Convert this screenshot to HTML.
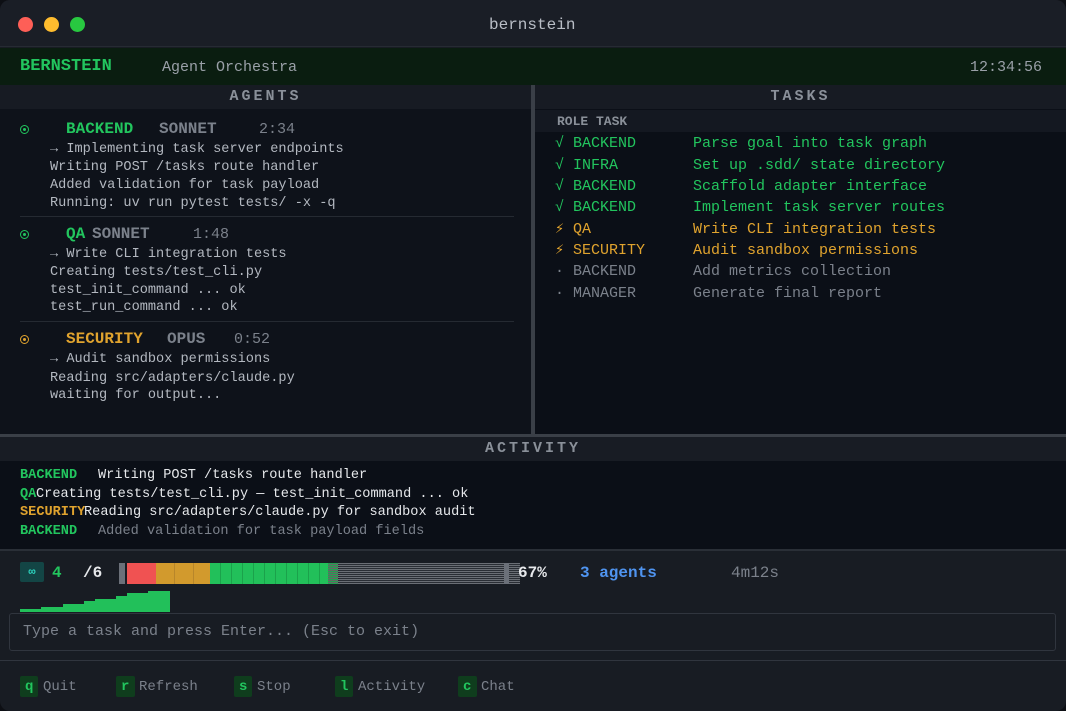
<!DOCTYPE html>
<html><head><meta charset="utf-8"><style>
*{margin:0;padding:0;box-sizing:border-box}
body{width:1066px;height:711px;background:#0d0f14;overflow:hidden;font-family:"Liberation Mono","DejaVu Sans Mono",monospace;position:relative}
.a{position:absolute;white-space:pre;line-height:1}
.g{color:#22c55e}.o{color:#e0a32e}.m{color:#7b818b}.w{color:#e6e8eb}.t{color:#b3b8c0}
.b{font-weight:bold}
.sec{position:absolute;background:#171b23;color:#8a9099;font-weight:bold;font-size:15px;letter-spacing:3px;text-align:center;line-height:24px}
.ic{position:absolute;width:9px;height:9px;border-radius:50%;border:1.5px solid currentColor}
.ic::after{content:"";position:absolute;left:1.5px;top:1.5px;width:3px;height:3px;border-radius:50%;background:currentColor}
</style></head><body>
<div style="position:absolute;left:0;top:0;width:1066px;height:711px;background:#181c23;border-radius:10px"></div>
<div style="position:absolute;left:0;top:0;width:1066px;height:47px;background:#1a1e26;border-radius:10px 10px 0 0;border-bottom:1px solid #262b33"></div>
<div style="position:absolute;left:18px;top:17px;width:15px;height:15px;border-radius:50%;background:#fe5f57"></div>
<div style="position:absolute;left:44px;top:17px;width:15px;height:15px;border-radius:50%;background:#febc2e"></div>
<div style="position:absolute;left:70px;top:17px;width:15px;height:15px;border-radius:50%;background:#28c840"></div>
<div class="a" style="left:489px;top:17px;font-size:16px;color:#b9bec6">bernstein</div>
<div style="position:absolute;left:0;top:48px;width:1066px;height:37px;background:#0a1d10"></div>
<div class="a g b" style="left:20px;top:58px;font-size:17px">BERNSTEIN</div>
<div class="a" style="left:162px;top:60px;font-size:15px;color:#9aa0a8">Agent Orchestra</div>
<div class="a" style="left:970px;top:60px;font-size:15px;color:#9aa0a8">12:34:56</div>
<div style="position:absolute;left:0;top:85px;width:531px;height:349px;background:#0e121a"></div>
<div class="sec" style="left:0;top:85px;width:531px">AGENTS</div>
<div style="position:absolute;left:531px;top:85px;width:4px;height:349px;background:#3a3f47"></div>
<div style="font-size:13.6px">
<div class="ic g" style="left:20px;top:125px"></div>
<div class="a g b" style="left:66px;top:121px;font-size:16px">BACKEND</div>
<div class="a m b" style="left:159px;top:121px;font-size:16px">SONNET</div>
<div class="a m" style="left:259px;top:122px;font-size:15px">2:34</div>
<div class="a t" style="left:50px;top:143px">→ Implementing task server endpoints</div>
<div class="a t" style="left:50px;top:161px">Writing POST /tasks route handler</div>
<div class="a t" style="left:50px;top:179px">Added validation for task payload</div>
<div class="a t" style="left:50px;top:197px">Running: uv run pytest tests/ -x -q</div>
<div style="position:absolute;left:20px;top:216px;width:494px;height:1px;background:#252a32"></div>
<div class="ic g" style="left:20px;top:230px"></div>
<div class="a g b" style="left:66px;top:226px;font-size:16px">QA</div>
<div class="a m b" style="left:92px;top:226px;font-size:16px">SONNET</div>
<div class="a m" style="left:193px;top:227px;font-size:15px">1:48</div>
<div class="a t" style="left:50px;top:248px">→ Write CLI integration tests</div>
<div class="a t" style="left:50px;top:266px">Creating tests/test_cli.py</div>
<div class="a t" style="left:50px;top:284px">test_init_command ... ok</div>
<div class="a t" style="left:50px;top:301px">test_run_command ... ok</div>
<div style="position:absolute;left:20px;top:321px;width:494px;height:1px;background:#252a32"></div>
<div class="ic o" style="left:20px;top:335px"></div>
<div class="a o b" style="left:66px;top:331px;font-size:16px">SECURITY</div>
<div class="a m b" style="left:167px;top:331px;font-size:16px">OPUS</div>
<div class="a m" style="left:234px;top:332px;font-size:15px">0:52</div>
<div class="a t" style="left:50px;top:353px">→ Audit sandbox permissions</div>
<div class="a t" style="left:50px;top:372px">Reading src/adapters/claude.py</div>
<div class="a t" style="left:50px;top:389px">waiting for output...</div>
</div>
<div style="position:absolute;left:535px;top:85px;width:531px;height:349px;background:#0b0f17"></div>
<div class="sec" style="left:535px;top:85px;width:531px">TASKS</div>
<div style="position:absolute;left:535px;top:110px;width:531px;height:22px;background:#141821"></div>
<div class="a b" style="left:557px;top:115px;font-size:13px;color:#8a9099">ROLE TASK</div>
<div style="font-size:15px">
<div class="a g" style="left:555px;top:136px">√ BACKEND</div><div class="a g" style="left:693px;top:136px">Parse goal into task graph</div>
<div class="a g" style="left:555px;top:158px">√ INFRA</div><div class="a g" style="left:693px;top:158px">Set up .sdd/ state directory</div>
<div class="a g" style="left:555px;top:179px">√ BACKEND</div><div class="a g" style="left:693px;top:179px">Scaffold adapter interface</div>
<div class="a g" style="left:555px;top:200px">√ BACKEND</div><div class="a g" style="left:693px;top:200px">Implement task server routes</div>
<div class="a o" style="left:555px;top:222px">⚡ QA</div><div class="a o" style="left:693px;top:222px">Write CLI integration tests</div>
<div class="a o" style="left:555px;top:243px">⚡ SECURITY</div><div class="a o" style="left:693px;top:243px">Audit sandbox permissions</div>
<div class="a m" style="left:555px;top:264px">· BACKEND</div><div class="a m" style="left:693px;top:264px">Add metrics collection</div>
<div class="a m" style="left:555px;top:286px">· MANAGER</div><div class="a m" style="left:693px;top:286px">Generate final report</div>
</div>
<div style="position:absolute;left:0;top:434px;width:1066px;height:3px;background:#3a3f47"></div>
<div class="sec" style="left:0;top:437px;width:1066px;background:#181c24">ACTIVITY</div>
<div style="position:absolute;left:0;top:461px;width:1066px;height:88px;background:#0b0f17"></div>
<div style="font-size:13.6px">
<div class="a g b" style="left:20px;top:469px">BACKEND</div><div class="a w" style="left:98px;top:469px">Writing POST /tasks route handler</div>
<div class="a g b" style="left:20px;top:488px">QA</div><div class="a w" style="left:36px;top:488px">Creating tests/test_cli.py — test_init_command ... ok</div>
<div class="a o b" style="left:20px;top:506px">SECURITY</div><div class="a w" style="left:84px;top:506px">Reading src/adapters/claude.py for sandbox audit</div>
<div class="a g b" style="left:20px;top:525px">BACKEND</div><div class="a m" style="left:98px;top:525px">Added validation for task payload fields</div>
</div>
<div style="position:absolute;left:0;top:549px;width:1066px;height:2px;background:#2a2f37"></div>
<div style="position:absolute;left:20px;top:562px;width:24px;height:20px;background:#134545;border-radius:2px;color:#2dd4bf;font-size:12px;text-align:center;line-height:20px;font-weight:bold">∞</div>
<div class="a g b" style="left:52px;top:565px;font-size:16px">4</div>
<div class="a w b" style="left:83px;top:565px;font-size:16px">/6</div>
<div style="position:absolute;left:119px;top:563px;width:6px;height:21px;background:#6b7079"></div>
<div style="position:absolute;left:127px;top:563px;width:29px;height:21px;background:#f05252"></div>
<div style="position:absolute;left:156px;top:563px;width:54px;height:21px;background:#d29a2d;background-image:repeating-linear-gradient(90deg,transparent 0 18px,#b8862a 18px 19px)"></div>
<div style="position:absolute;left:210px;top:563px;width:118px;height:21px;background:#22c05a;background-image:repeating-linear-gradient(90deg,transparent 0 10px,#1ba24b 10px 11px)"></div>
<div style="position:absolute;left:328px;top:563px;width:10px;height:21px;background:repeating-linear-gradient(0deg,#22a050 0 1px,#666 1px 2px)"></div>
<div style="position:absolute;left:338px;top:563px;width:182px;height:21px;background:repeating-linear-gradient(0deg,#6a6e75 0 1px,#2a2e35 1px 2px)"></div>
<div style="position:absolute;left:504px;top:563px;width:5px;height:21px;background:#6b7079"></div>
<div class="a w b" style="left:518px;top:565px;font-size:16px">67%</div>
<div class="a b" style="left:580px;top:565px;font-size:16px;color:#4f94f0">3 agents</div>
<div class="a m" style="left:731px;top:565px;font-size:16px">4m12s</div>
<div style="position:absolute;left:20px;top:609px;width:21px;height:3px;background:#22c05a"></div>
<div style="position:absolute;left:41px;top:607px;width:22px;height:5px;background:#22c05a"></div>
<div style="position:absolute;left:63px;top:604px;width:21px;height:8px;background:#22c05a"></div>
<div style="position:absolute;left:84px;top:601px;width:11px;height:11px;background:#22c05a"></div>
<div style="position:absolute;left:95px;top:599px;width:21px;height:13px;background:#22c05a"></div>
<div style="position:absolute;left:116px;top:596px;width:11px;height:16px;background:#22c05a"></div>
<div style="position:absolute;left:127px;top:593px;width:21px;height:19px;background:#22c05a"></div>
<div style="position:absolute;left:148px;top:591px;width:22px;height:21px;background:#22c05a"></div>
<div style="position:absolute;left:9px;top:613px;width:1047px;height:38px;border:1px solid #30353e;border-radius:3px;background:#181c23"></div>
<div class="a" style="left:23px;top:624px;font-size:15px;color:#7b818b">Type a task and press Enter... (Esc to exit)</div>
<div style="position:absolute;left:0;top:660px;width:1066px;height:1px;background:#30353e"></div>
<div style="font-size:14px">
<div style="position:absolute;left:20px;top:676px;width:18px;height:21px;background:#0f3d1d;border-radius:2px"></div><div class="a g b" style="left:25px;top:680px">q</div><div class="a m" style="left:43px;top:680px">Quit</div>
<div style="position:absolute;left:116px;top:676px;width:19px;height:21px;background:#0f3d1d;border-radius:2px"></div><div class="a g b" style="left:121px;top:680px">r</div><div class="a m" style="left:139px;top:680px">Refresh</div>
<div style="position:absolute;left:234px;top:676px;width:18px;height:21px;background:#0f3d1d;border-radius:2px"></div><div class="a g b" style="left:239px;top:680px">s</div><div class="a m" style="left:257px;top:680px">Stop</div>
<div style="position:absolute;left:335px;top:676px;width:18px;height:21px;background:#0f3d1d;border-radius:2px"></div><div class="a g b" style="left:340px;top:680px">l</div><div class="a m" style="left:358px;top:680px">Activity</div>
<div style="position:absolute;left:458px;top:676px;width:19px;height:21px;background:#0f3d1d;border-radius:2px"></div><div class="a g b" style="left:463px;top:680px">c</div><div class="a m" style="left:481px;top:680px">Chat</div>
</div>
</body></html>
